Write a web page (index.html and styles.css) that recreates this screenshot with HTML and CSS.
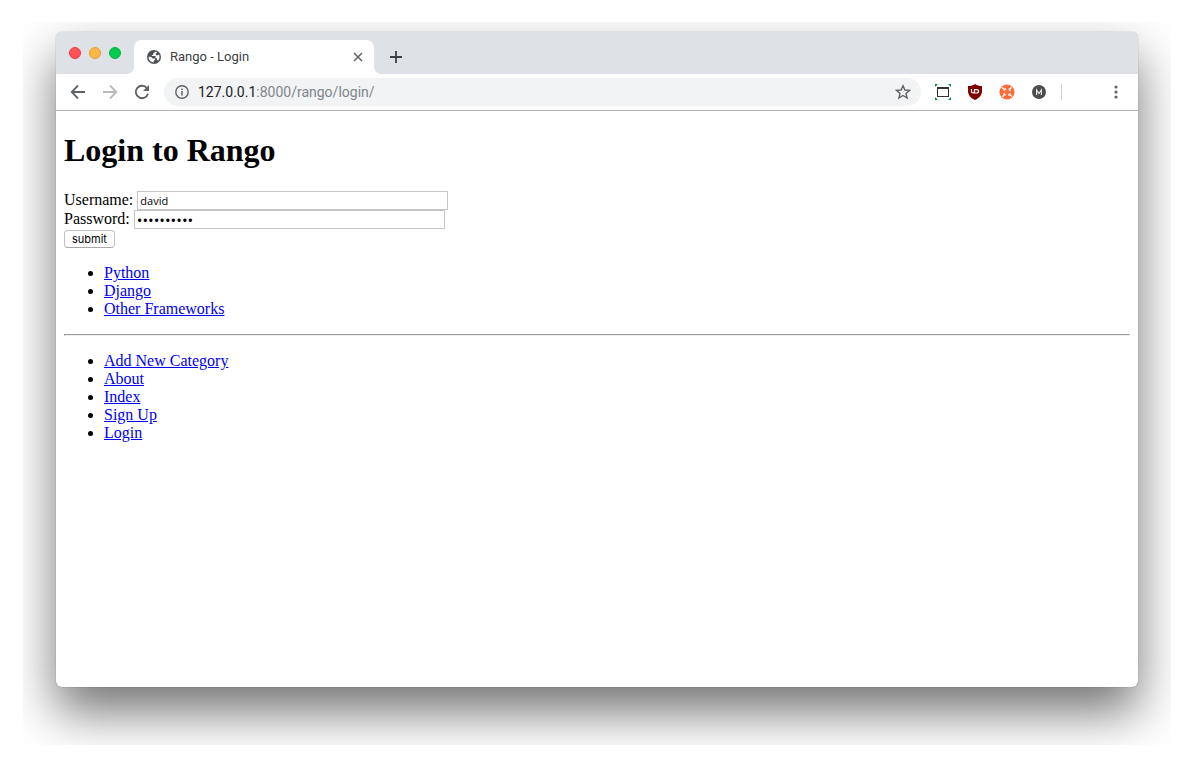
FILE: index.html
```html
<!DOCTYPE html>
<html lang="en">
<head>
<meta charset="utf-8">
<title>Rango - Login</title>
<link rel="stylesheet" href="styles.css">
</head>
<body>
<div class="backdrop">
  <div class="window">
    <header class="tabstrip">
      <div class="lights">
        <button class="light red" aria-label="Close window"></button>
        <button class="light amber" aria-label="Minimise window"></button>
        <button class="light green" aria-label="Zoom window"></button>
      </div>
      <div class="tab">
        <svg class="globe" viewBox="0 0 14 14" width="14" height="14" aria-hidden="true">
          <circle cx="7" cy="7" r="7" fill="#4d5156"/>
          <path d="M8.600 1.600L6.200 3.400V5H4.900V6.100H8.600V8.300H10V9.900L11.400 10.500C12.700 8.800 12.900 6.400 12 4.500L10.800 5.200H8.800V3.500L10.200 2.300ZM1.500 6.800C1.500 9.700 3.600 12.200 6.700 12.500V11L8 9.700V8.600H5.400L4.400 6.900Z" fill="#fff"/>
        </svg>
        <span class="tab-title">Rango - Login</span>
        <button class="icon close" aria-label="Close tab">
          <svg viewBox="0 0 10 10" width="10" height="10"><path d="M1 1L9 9M9 1L1 9" stroke="#5f6368" stroke-width="1.500"/></svg>
        </button>
      </div>
      <button class="icon new-tab" aria-label="New tab">
        <svg viewBox="0 0 12 12" width="12" height="12"><path d="M6 0V12M0 6H12" stroke="#3c4043" stroke-width="1.800"/></svg>
      </button>
    </header>
    <nav class="toolbar" aria-label="Browser">
      <button class="icon" aria-label="Back">
        <svg viewBox="0 0 16 16" width="16" height="16" fill="none" stroke="#5f6368" stroke-width="1.800"><path d="M15 8H2M8 1.500L1.700 8L8 14.500"/></svg>
      </button>
      <button class="icon" aria-label="Forward">
        <svg viewBox="0 0 16 16" width="16" height="16" fill="none" stroke="#bababa" stroke-width="1.800"><path d="M1 8H14M8 1.500L14.300 8L8 14.500"/></svg>
      </button>
      <button class="icon" aria-label="Reload">
        <svg viewBox="0 0 16 16" width="16" height="16"><path d="M13 4.200A6.200 6.200 0 1 0 14 9.700" fill="none" stroke="#5f6368" stroke-width="1.900"/><path d="M15 1V7H9Z" fill="#5f6368"/></svg>
      </button>
      <div class="omnibox">
        <svg viewBox="0 0 14 14" width="14" height="14" aria-hidden="true"><circle cx="7" cy="7" r="6.200" fill="none" stroke="#5f6368" stroke-width="1.400"/><path d="M7 6V10.500M7 3.400V5" stroke="#5f6368" stroke-width="1.500"/></svg>
        <span class="url"><span class="host">127.0.0.1</span>:8000/rango/login/</span>
        <button class="icon" aria-label="Bookmark this page">
          <svg viewBox="0 0 16 16" width="16" height="16"><path d="M8 1.800L9.900 6L14.500 6.400L11 9.400L12.100 14L8 11.500L3.900 14L5 9.400L1.500 6.400L6.100 6Z" fill="none" stroke="#5f6368" stroke-width="1.400"/></svg>
        </button>
      </div>
      <div class="extensions">
        <button class="icon" aria-label="Screen capture">
          <svg viewBox="0 0 16 16" width="16" height="16" fill="none"><rect x="2.500" y="3.500" width="11" height="9" stroke="#333"/><path d="M2 4H14" stroke="#333" stroke-width="2"/><path d="M0 0H3L0 3ZM16 0V3L13 0ZM16 16H13L16 13ZM0 16V13L3 16Z" fill="#168736"/></svg>
        </button>
        <button class="icon" aria-label="Content blocker">
          <svg viewBox="0 0 16 16" width="16" height="16"><path d="M8 0C10 1.500 12 2 15 2V7C15 11.500 12 14 8 16C4 14 1 11.500 1 7V2C4 2 6 1.500 8 0Z" fill="#800000"/><path d="M4.500 5V7.500Q4.500 9 6 9T7.500 7.500V5M8 5.600H9.500Q11.600 5.600 11.600 7.300T9.500 9H7.500" fill="none" stroke="#fff" stroke-width="1.200"/></svg>
        </button>
        <button class="icon" aria-label="Help extension">
          <svg viewBox="0 0 16 16" width="16" height="16"><circle cx="8" cy="8" r="7.600" fill="#ff6c37"/><circle cx="8" cy="8" r="3.400" fill="none" stroke="#fff" stroke-width="1.600" stroke-dasharray="2.670" stroke-dashoffset="-1.330"/><path d="M3 3.500L5.500 5.500M12.500 3L10.500 5.500M13 12.500L10.500 10.500M3.500 13L5.500 10.500" stroke="#fff" stroke-width="1.300"/></svg>
        </button>
        <button class="icon" aria-label="M extension">
          <svg viewBox="0 0 16 16" width="16" height="16"><circle cx="8" cy="8" r="7" fill="#4d4d4d"/><path d="M5.600 11V6L8 9.500L10.400 6V11" fill="none" stroke="#e4e4e4" stroke-width="1.200"/></svg>
        </button>
      </div>
      <div class="divider"></div>
      <button class="icon menu" aria-label="Menu">
        <svg viewBox="0 0 4 14" width="4" height="14" fill="#5f6368"><circle cx="2" cy="2" r="1.600"/><circle cx="2" cy="7" r="1.600"/><circle cx="2" cy="12" r="1.600"/></svg>
      </button>
    </nav>
    <main class="page">
      <h1 class="heading">Login to Rango</h1>
      <form class="login">
        <div class="row"><label for="username">Username:</label><input class="field" id="username" type="text" value="david"></div>
        <div class="row"><label for="password">Password:</label><input class="field secret" id="password" type="password" value="rango12345"></div>
        <button class="submit" type="button">submit</button>
      </form>
      <ul class="links">
        <li><a href="#python">Python</a></li>
        <li><a href="#django">Django</a></li>
        <li><a href="#other">Other Frameworks</a></li>
      </ul>
      <hr class="rule">
      <ul class="links">
        <li><a href="#add">Add New Category</a></li>
        <li><a href="#about">About</a></li>
        <li><a href="#index">Index</a></li>
        <li><a href="#signup">Sign Up</a></li>
        <li><a href="#login">Login</a></li>
      </ul>
    </main>
  </div>
</div>
</body>
</html>
```

FILE: styles.css
```css
* {
  box-sizing: border-box;
}

body {
  margin: 0;
  min-height: 100vh;
  padding: 22px 23px;
  display: flex;
  background: #fff;
}

.backdrop {
  flex: 1;
  display: flex;
  overflow: hidden;
  padding: 10px 33px 58px;
}

.window {
  flex: 1;
  display: flex;
  flex-direction: column;
  border-radius: 6px;
  background: #fff;
  box-shadow: 0 0 1px rgba(0, 0, 0, 0.5), 0 25px 50px rgba(0, 0, 0, 0.55);
}

.icon {
  display: flex;
  align-items: center;
  justify-content: center;
  flex: none;
  padding: 0;
  border: 0;
  background: none;
}

.tabstrip {
  display: flex;
  height: 42px;
  border-radius: 6px 6px 0 0;
  background: #dee1e6;
  font-family: Roboto, sans-serif;
}

.lights {
  display: flex;
  gap: 8px;
  padding: 15px 13px 0;
}

.light {
  width: 12px;
  height: 12px;
  padding: 0;
  border: 1px solid;
  border-radius: 50%;
}

.red {
  background: #ff5257;
  border-color: #e33e45;
}

.amber {
  background: #fdb843;
  border-color: #e09f3a;
}

.green {
  background: #00cb4c;
  border-color: #0ab03e;
}

.tab {
  position: relative;
  display: flex;
  align-items: center;
  gap: 9px;
  width: 240px;
  margin-top: 8px;
  padding: 0 11px 0 13px;
  border-radius: 8px 8px 0 0;
  background: #fff;
}

.tab::before,
.tab::after {
  content: "";
  position: absolute;
  bottom: 0;
  width: 8px;
  height: 8px;
}

.tab::before {
  right: 100%;
  background: radial-gradient(circle at 0 0, transparent 8px, #fff 8px);
}

.tab::after {
  left: 100%;
  background: radial-gradient(circle at 100% 0, transparent 8px, #fff 8px);
}

.tab-title {
  flex: 1;
  font-size: 13px;
  line-height: 16px;
  padding-bottom: 1px;
  color: #3c4043;
}

.new-tab {
  width: 44px;
  padding-top: 8px;
}

.toolbar {
  display: flex;
  align-items: center;
  height: 37px;
  padding: 0 20px 0 14px;
  gap: 16px;
  border-bottom: 1px solid #b0b1b2;
}

.omnibox {
  flex: 1;
  display: flex;
  align-items: center;
  gap: 9px;
  height: 28px;
  margin-left: -2px;
  padding: 0 10px 0 11px;
  border-radius: 14px;
  background: #f1f3f4;
  font-family: Roboto, sans-serif;
}

.url {
  flex: 1;
  font-size: 14px;
  color: #80868b;
}

.host {
  color: #202124;
}

.extensions {
  display: flex;
  gap: 16px;
  margin-left: -2px;
}

.divider {
  width: 1px;
  height: 16px;
  margin: 0 36px 0 -2px;
  background: #ccced1;
}

.page {
  flex: 1;
  padding: 0 8px;
  font-family: "Liberation Serif", "Times New Roman", serif;
  font-size: 16px;
  line-height: 18px;
  color: #000;
}

.heading {
  margin: 21px 0 23px;
  font-size: 32px;
  line-height: 36px;
}

.row {
  display: flex;
  gap: 4px;
  height: 19px;
}

.field {
  width: 311px;
  height: 19px;
  padding: 1px 2px;
  border: 1px solid #c6c6c6;
  background: #fff;
  font-family: "Open Sans", sans-serif;
  font-size: 11px;
  color: #000;
}

.secret {
  font-size: 15px;
}

.submit {
  display: block;
  height: 18px;
  margin-top: 1px;
  padding: 0 7px;
  border: 1px solid #c2c2c2;
  border-bottom-color: #a8a8a8;
  border-radius: 4px;
  background: #fff;
  font-family: Inter, sans-serif;
  font-size: 11px;
  line-height: 16px;
  color: #000;
}

.links {
  margin: 16px 0;
  padding-left: 40px;
}

.links a {
  color: #0000ee;
}

.rule {
  margin: 16px 0;
  border: 1px solid;
  border-color: #9a9a9a #eee #eee #9a9a9a;
}
```
